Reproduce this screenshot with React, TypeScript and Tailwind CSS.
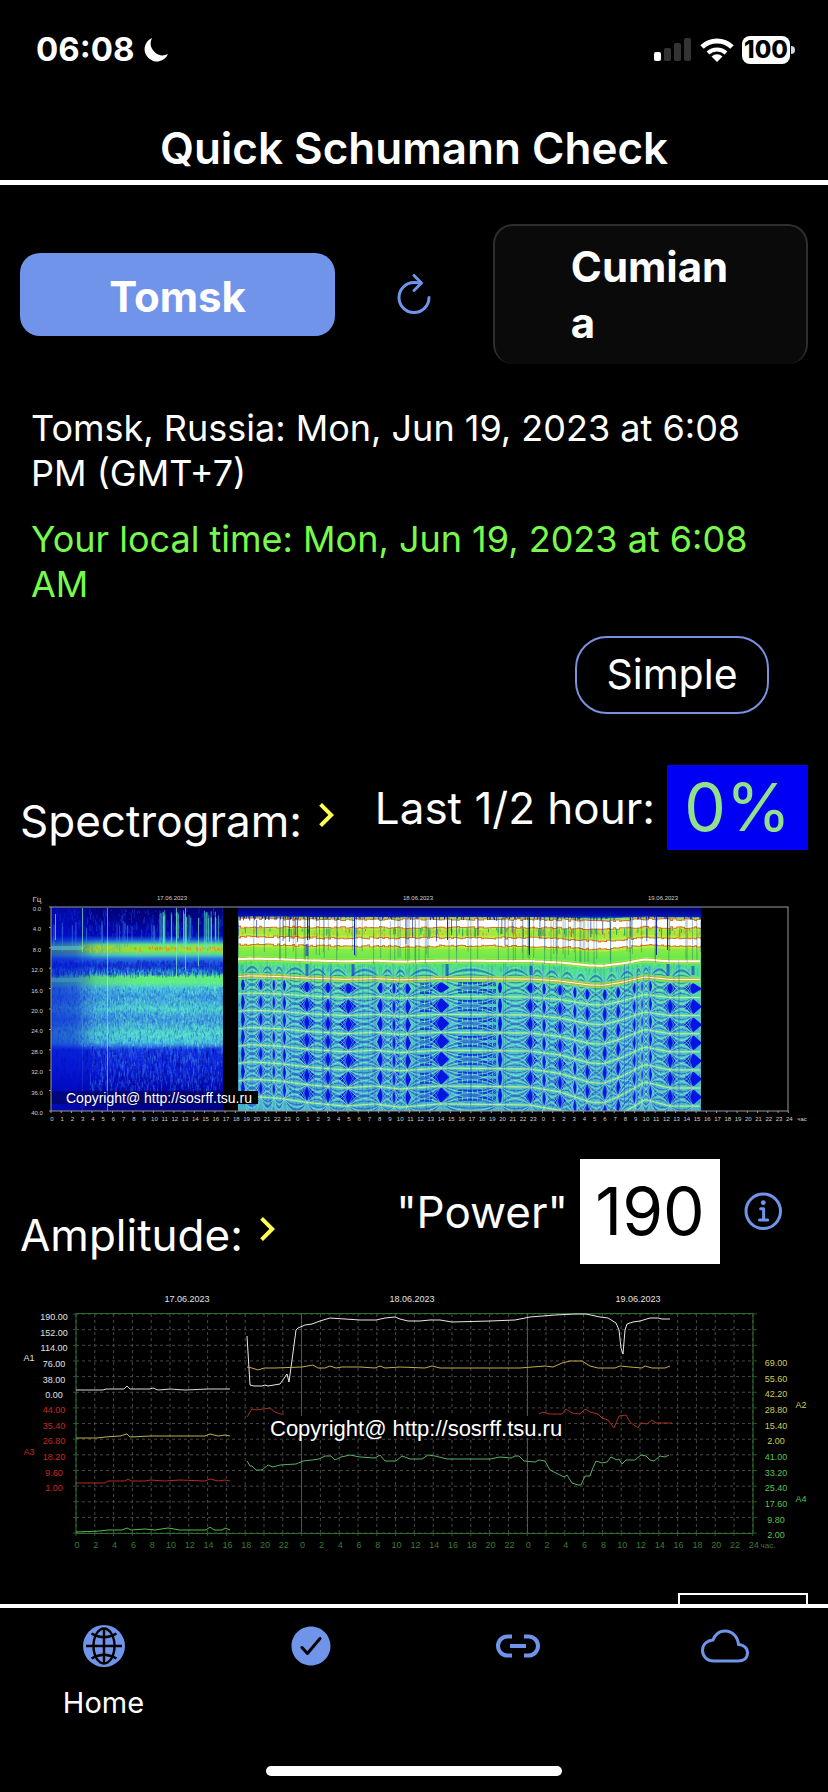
import React, { useState } from 'react';
import { IoRefreshOutline, IoCheckmarkCircle, IoCloudOutline, IoInformationCircleOutline } from 'react-icons/io5';
import { MdChevronRight } from 'react-icons/md';

// Small seeded generator so the charts look the same on every render
const makeRandom = (seed: number) => () => {
  seed = (seed * 16807) % 2147483647;
  return seed / 2147483647;
};

// ---------- spectrogram ----------

const HOUR = 10.24;
const PLOT_LEFT = 51;
const PLOT_TOP = 27;
const PLOT_BOTTOM = 231;
const LIVE_START = 238;
const LIVE_END = 701;

// [x, spacing between harmonics]
const spacing: [number, number][] = [
  [238, 17.4], [250, 17.2], [280, 17.4], [310, 17.8], [345, 18.1], [375, 17.9], [400, 18.2],
  [440, 17.9], [530, 18.0], [560, 18.5], [590, 19.5], [603, 19.6], [620, 18.9], [645, 17.5], [670, 18.1], [701, 18.1],
];

const spacingAt = (x: number) => {
  for (let i = 1; i < spacing.length; i++) {
    if (x <= spacing[i][0]) {
      const [x0, s0] = spacing[i - 1];
      const [x1, s1] = spacing[i];
      const t = (x - x0) / (x1 - x0);
      return s0 + (s1 - s0) * t;
    }
  }
  return spacing[spacing.length - 1][1];
};

const harmonicY = (x: number, n: number) => PLOT_TOP + n * spacingAt(x);

const harmonicPath = (n: number, from = LIVE_START, to = LIVE_END) => {
  let d = '';
  for (let x = from; x <= to; x += 3) {
    d += `${d ? 'L' : 'M'}${x} ${harmonicY(x, n).toFixed(1)}`;
  }
  return d;
};

// [x, half width] of the quiet spots
const nodes: [number, number][] = [
  [243, 2], [261, 4], [274, 2], [284, 2], [307, 8], [328, 5], [348, 9], [381, 4], [394, 2], [407, 4], [441, 9],
  [500, 2], [531, 6], [544, 2], [560, 6], [575, 2], [587, 4], [605, 3], [618, 3], [635, 3], [642, 2], [650, 2], [670, 6], [693, 9],
];

const diamondPath = () => {
  let d = '';
  for (const [x, w] of nodes) {
    for (let n = 4.5; n < 11.5; n++) {
      const y = harmonicY(x, n);
      const h = n < 5 ? 5 : 7;
      d += `M${x - w} ${y.toFixed(1)}l${w - 1} ${-h}h2l${w - 1} ${h}l${1 - w} ${h}h-2z`;
    }
  }
  return d;
};

const latticePath = (amplitude: number) => {
  let d = '';
  for (let i = 1; i < nodes.length; i++) {
    const x0 = nodes[i - 1][0];
    const x1 = nodes[i][0];
    for (let n = 4; n < 12; n++) {
      const y0 = harmonicY(x0, n);
      const y1 = harmonicY(x1, n);
      const mid = (x0 + x1) / 2;
      const my = harmonicY(mid, n);
      d += `M${x0} ${y0.toFixed(1)}Q${mid} ${(my + amplitude).toFixed(1)} ${x1} ${y1.toFixed(1)}`;
      d += `M${x0} ${y0.toFixed(1)}Q${mid} ${(my - amplitude).toFixed(1)} ${x1} ${y1.toFixed(1)}`;
    }
  }
  return d;
};

const stripePath = () => {
  let d = '';
  for (let n = 4; n < 11; n++) {
    for (const off of [0.3, 0.68]) {
      const y = harmonicY(478, n + off);
      d += `M458 ${y.toFixed(1)}H496`;
      d += `M420 ${(y + 1).toFixed(1)}H432M390 ${y.toFixed(1)}H400`;
    }
  }
  return d;
};

// Short pieces of a band, each a little thicker or thinner than the next
const bandPath = (n: number, seed: number) => {
  const random = makeRandom(seed);
  let d = '';
  for (let x = LIVE_START; x < LIVE_END; x += 3) {
    const y = harmonicY(x, n);
    const h = 2.5 + random() * 2;
    d += `M${x} ${(y - h).toFixed(1)}h3.2V${(y + h).toFixed(1)}h-3.2z`;
  }
  return d;
};

// Little dashes scattered over a box
const speckle = (seed: number, count: number, x0: number, x1: number, y0: number, y1: number, len: number) => {
  const random = makeRandom(seed);
  let d = '';
  for (let i = 0; i < count; i++) {
    const x = x0 + random() * (x1 - x0);
    const y = y0 + random() * (y1 - y0 - len);
    d += `M${x.toFixed(1)} ${y.toFixed(1)}v${(1 + random() * len).toFixed(1)}`;
  }
  return d;
};

const streaks = (seed: number, count: number, x0: number, x1: number, top: number, bottom: number) => {
  const random = makeRandom(seed);
  let d = '';
  for (let i = 0; i < count; i++) {
    const x = x0 + random() * (x1 - x0);
    const y = top + random() * 8;
    d += `M${x.toFixed(1)} ${y.toFixed(1)}V${(bottom - random() * 14).toFixed(1)}`;
  }
  return d;
};

const freqLabels = ['0.0', '4.0', '8.0', '12.0', '16.0', '20.0', '24.0', '28.0', '32.0', '36.0', '40.0'];
const hourMarks = Array.from({ length: 73 }, (_, i) => i);

const Spectrogram = () => (
  <svg viewBox="0 0 828 250" className="block w-full" role="img" aria-label="Spectrogram">
    <defs>
      <linearGradient id="quiet" x1="0" y1="0" x2="0" y2="1">
        <stop offset="0" stopColor="#00006a" />
        <stop offset="0.14" stopColor="#0208b4" />
        <stop offset="0.165" stopColor="#2070e0" />
        <stop offset="0.185" stopColor="#60e880" />
        <stop offset="0.2" stopColor="#98e038" />
        <stop offset="0.215" stopColor="#80e848" />
        <stop offset="0.235" stopColor="#50d0b0" />
        <stop offset="0.255" stopColor="#2470e0" />
        <stop offset="0.29" stopColor="#1a44dc" />
        <stop offset="0.32" stopColor="#38b8d8" />
        <stop offset="0.345" stopColor="#62ee78" />
        <stop offset="0.37" stopColor="#60ec80" />
        <stop offset="0.4" stopColor="#46c4dc" />
        <stop offset="0.44" stopColor="#3a98e0" />
        <stop offset="0.5" stopColor="#4cd0d0" />
        <stop offset="0.55" stopColor="#3890e0" />
        <stop offset="0.62" stopColor="#50dccc" />
        <stop offset="0.665" stopColor="#44bcdc" />
        <stop offset="0.7" stopColor="#1030e0" />
        <stop offset="0.8" stopColor="#0a1cd4" />
        <stop offset="0.88" stopColor="#0208b8" />
        <stop offset="1" stopColor="#000080" />
      </linearGradient>
      <linearGradient id="early" x1="0" y1="0" x2="1" y2="0">
        <stop offset="0" stopColor="#0010d0" stopOpacity="0.6" />
        <stop offset="0.14" stopColor="#0010d0" stopOpacity="0.5" />
        <stop offset="0.26" stopColor="#0010d0" stopOpacity="0.12" />
        <stop offset="0.5" stopColor="#0010d0" stopOpacity="0" />
      </linearGradient>
      <linearGradient id="live" x1="0" y1="0" x2="0" y2="1">
        <stop offset="0" stopColor="#000070" />
        <stop offset="0.045" stopColor="#0010b8" />
        <stop offset="0.06" stopColor="#48d0a0" />
        <stop offset="0.12" stopColor="#a8e83c" />
        <stop offset="0.2" stopColor="#90ec40" />
        <stop offset="0.25" stopColor="#68e850" />
        <stop offset="0.29" stopColor="#50e080" />
        <stop offset="0.34" stopColor="#50dc98" />
        <stop offset="0.4" stopColor="#50d8a0" />
        <stop offset="0.5" stopColor="#50c4c8" />
        <stop offset="1" stopColor="#48b0cc" />
      </linearGradient>
      <clipPath id="quietClip"><rect x="51" y="27" width="172" height="204" /></clipPath>
      <clipPath id="liveClip"><rect x="238" y="27" width="463" height="204" /></clipPath>
    </defs>

    <g clipPath="url(#quietClip)" fill="none">
      <rect x="51" y="27" width="172" height="204" fill="url(#quiet)" />
      <path d={speckle(11, 1100, 51, 223, 80, 98, 4)} stroke="#0c20c8" strokeOpacity="0.4" />
      <path d={speckle(12, 1600, 51, 223, 106, 165, 3)} stroke="#1a48d8" strokeOpacity="0.3" />
      <path d={speckle(13, 1500, 80, 223, 100, 168, 3)} stroke="#6ff0c8" strokeOpacity="0.4" />
      <path d={speckle(14, 900, 90, 223, 162, 215, 6)} stroke="#3c80e8" strokeOpacity="0.35" />
      <path d={speckle(15, 500, 51, 223, 166, 231, 6)} stroke="#000890" strokeOpacity="0.5" />
      <path d={speckle(16, 220, 51, 223, 28, 62, 8)} stroke="#1438d8" strokeOpacity="0.6" />
      <rect x="51" y="27" width="172" height="204" fill="url(#early)" />
      <path d="M51 68H82" stroke="#58d8e8" strokeWidth="4" strokeOpacity="0.5" />
      <path d="M51 100H82" stroke="#40b0e0" strokeWidth="4" strokeOpacity="0.4" />
      <path d={speckle(17, 160, 82, 223, 65, 73, 2)} stroke="#e0c828" strokeOpacity="0.6" />
      <path d={speckle(18, 60, 135, 223, 66, 71, 2)} stroke="#f08028" strokeOpacity="0.8" />
      <path d={streaks(19, 34, 160, 222, 30, 72)} stroke="#58e8b8" strokeOpacity="0.6" />
      <path d={streaks(20, 16, 54, 160, 40, 72)} stroke="#40a0e0" strokeOpacity="0.5" />
      <path d="M82.500 28V72M176.500 28V98M185.500 28V90M198.500 38V86M55.500 34V60" stroke="#80ecb0" strokeOpacity="0.7" />
      <path d="M107.500 28V231" stroke="#d0f0ff" strokeOpacity="0.5" />
      <path d="M82.500 72V231M198.500 86V215M141.500 50V160" stroke="#60b0e0" strokeOpacity="0.15" />
    </g>

    <g clipPath="url(#liveClip)" fill="none">
      <rect x="238" y="27" width="463" height="204" fill="url(#live)" />
      <path d={speckle(31, 260, 238, 701, 84, 97, 8)} stroke="#38a0e0" strokeOpacity="0.5" />
      <path d={speckle(32, 2600, 238, 701, 108, 231, 2)} stroke="#1c50dc" strokeOpacity="0.45" />
      <path d={speckle(33, 1600, 238, 701, 104, 231, 2)} stroke="#70e8b8" strokeOpacity="0.5" />
      <path d={latticePath(8)} stroke="#1838d0" strokeOpacity="0.55" />
      <path d={latticePath(18)} stroke="#1838d0" strokeWidth="2" strokeOpacity="0.5" />
      <path d={diamondPath()} fill="#0414e4" />
      <path d={stripePath()} stroke="#0a28dc" strokeWidth="4" strokeOpacity="0.8" strokeDasharray="4 1" />
      <path d={latticePath(13)} stroke="#80ecc8" strokeOpacity="0.7" />
      <path d={latticePath(23)} stroke="#80ecc8" strokeOpacity="0.6" />
      <path d={latticePath(37)} stroke="#80ecc8" strokeOpacity="0.4" />
      {[5, 6, 7, 8, 9, 10, 11].map((n) => (
        <g key={n}>
          <path d={harmonicPath(n)} stroke="#70e0a8" strokeWidth="3" strokeOpacity="0.5" />
          <path d={harmonicPath(n)} stroke="#dcf48c" strokeOpacity="0.8" />
        </g>
      ))}
      {[3, 4].map((n) => (
        <g key={n}>
          <path d={harmonicPath(n)} stroke="#8cf040" strokeWidth="6" strokeOpacity="0.7" />
          <path d={harmonicPath(n)} stroke="#e09840" strokeWidth="3" strokeOpacity="0.8" />
          <path d={harmonicPath(n)} stroke="#fffff0" strokeWidth={n === 3 ? 2 : 1} />
        </g>
      ))}
      {[0.92, 1.95].map((n) => (
        <g key={n}>
          <path d={harmonicPath(n)} stroke="#c8f040" strokeWidth="13" strokeOpacity="0.7" />
          <path d={bandPath(n, 50 + n * 20)} stroke="#e84020" strokeWidth="2" strokeOpacity="0.7" />
          <path d={bandPath(n, 50 + n * 20)} fill="#fff" />
        </g>
      ))}
      <path d={speckle(34, 160, 238, 701, 48, 58, 4)} stroke="#f08028" strokeOpacity="0.6" />
      <path d={speckle(35, 260, 238, 701, 34, 40, 5)} stroke="#0818b0" strokeOpacity="0.8" />
      <path d={speckle(36, 60, 238, 701, 48, 58, 9)} stroke="#28b060" />
      <path d={streaks(37, 90, 238, 701, 33, 84)} stroke="#085070" strokeOpacity="0.35" />
      <path d={streaks(38, 22, 238, 701, 34, 66)} stroke="#0418a0" strokeOpacity="0.6" />
      <path d="M307.500 34V60M354.500 36V75M447.500 34V60M656.500 34V75M667.500 36V70M529.500 36V75" stroke="#0414b0" strokeOpacity="0.9" />
      <path d="M307 64V76M307 84V96M353 84V96M447 84V96M668 84V96M693 86V95M531 86V95" stroke="#1428d8" strokeWidth="3" strokeOpacity="0.6" />
      <path d={streaks(39, 70, 238, 701, 80, 231)} stroke="#103cc8" strokeOpacity="0.2" />
    </g>

    <rect x="51" y="211" width="172" height="13" fill="#000020" fillOpacity="0.4" />
    <rect x="223" y="211" width="35" height="13" fill="#000" />
    <rect x="51" y="27" width="737" height="204" fill="none" stroke="#9a9a9a" />
    <g stroke="#9a9a9a">
      {freqLabels.map((label, i) => (
        <line key={label} x1="49" x2="51" y1={PLOT_TOP + i * 20.4} y2={PLOT_TOP + i * 20.4} />
      ))}
      {hourMarks.map((i) => (
        <line key={i} x1={PLOT_LEFT + i * HOUR} x2={PLOT_LEFT + i * HOUR} y1={PLOT_BOTTOM} y2={PLOT_BOTTOM + 2} />
      ))}
    </g>
    <g fill="#d0d0d0" fontSize="6" textAnchor="middle" className="font-['Liberation_Sans',sans-serif]">
      <text x="37" y="22" fontSize="8">Гц</text>
      {freqLabels.map((label, i) => (
        <text key={label} x="37" y={31 + i * 20.4}>{label}</text>
      ))}
      {hourMarks.map((i) => (
        <text key={i} x={PLOT_LEFT + 1 + i * HOUR} y="241">{i === 72 ? 24 : i % 24}</text>
      ))}
      <text x="802" y="241">час</text>
      <text x="172" y="20">17.06.2023</text>
      <text x="418" y="20">18.06.2023</text>
      <text x="663" y="20">19.06.2023</text>
    </g>
    <text x="66" y="223" fill="#fff" fontSize="14" className="font-['Liberation_Sans',sans-serif]">
      Copyright@ http://sosrff.tsu.ru
    </text>
  </svg>
);

// ---------- amplitude ----------

const leftWhite = ['190.00', '152.00', '114.00', '76.00', '38.00', '0.00'];
const leftRed = ['44.00', '35.40', '26.80', '18.20', '9.60', '1.00'];
const rightYellow = ['69.00', '55.60', '42.20', '28.80', '15.40', '2.00'];
const rightGreen = ['41.00', '33.20', '25.40', '17.60', '9.80', '2.00'];
const ROW = 15.65;
const TWO_HOURS = 18.8;
const columns = Array.from({ length: 37 }, (_, i) => i);
const rows = Array.from({ length: 15 }, (_, i) => i);

const series = [
  // A1
  { color: '#d8d8d8', points: '76,110 103,110 106,109 124,109 127,106 130,109 150,109 153,108 158,110 170,109 185,110 208,109 230,109' },
  { color: '#e8e8e8', points: '247,56 250,105 254,106 262,106 265,105 268,106 280,104 287,94 289,102 292,80 296,50 298,48 305,45 312,44 320,41 330,38 345,39 360,40 376,40 385,38 395,37 400,39 408,41 420,41 430,40 440,40 452,42 490,41 515,40 530,37 555,35 575,34 586,34 600,37 608,38 616,43 619,50 621,68 623,74 625,50 627,44 633,42 640,41 650,38 658,38 662,39 670,39' },
  // A2
  { color: '#b8b050', points: '76,158 97,158 105,157 120,156 127,154 130,157 150,156 175,156 205,156 210,154 218,156 225,155 230,156' },
  { color: '#c8a850', points: '247,87 252,88 258,90 264,88 275,88 302,87 313,85 318,88 325,88 330,86 336,88 342,87 360,87 375,88 380,86 385,88 400,87 425,88 432,86 440,88 520,88 545,86 553,87 562,83 570,81 582,81 590,86 598,88 615,88 620,86 630,87 642,88 645,86 652,88 665,88 670,86' },
  // A3
  { color: '#b82a20', points: '76,203 105,203 108,201 125,201 128,199 131,201 145,201 150,200 165,201 180,200 205,201 210,199 218,201 225,200 230,201' },
  { color: '#a83020', points: '247,137 252,129 256,130 270,128 275,132 280,134 284,134' },
  { color: '#a83020', points: '539,134 543,132 549,134 562,134 566,129 572,133 580,134 585,129 590,132 598,134 602,138 608,140 614,148 619,136 626,135 630,142 638,148 641,143 647,144 652,140 656,143 672,143' },
  // A4
  { color: '#58b848', points: '76,252 100,251 108,250 122,250 127,248 131,250 145,249 155,250 168,248 180,250 206,250 210,247 214,250 222,250 225,248 230,250' },
  { color: '#58b060', points: '247,181 250,186 252,186 256,190 262,190 268,185 273,187 280,185 296,184 303,181 312,180 319,179 325,176 331,176 335,180 341,177 350,175 360,177 375,178 380,175 385,181 396,181 402,176 410,179 422,179 428,175 435,176 447,179 490,179 500,177 511,178 515,176 519,176 524,181 535,182 539,180 545,181 550,190 560,195 564,197 567,195 572,203 578,205 581,205 585,196 590,196 592,190 596,181 602,183 607,182 611,177 617,180 619,179 622,184 626,180 635,180 641,175 646,176 650,180 654,181 660,176 665,177 669,175' },
];

const Amplitude = () => (
  <svg viewBox="0 0 828 290" className="block w-full" role="img" aria-label="Amplitude chart">
    <g strokeDasharray="3 3" stroke="#484848">
      {rows.map((i) => (
        <line key={i} x1="76" x2="753" y1={34 + i * ROW} y2={34 + i * ROW} />
      ))}
      {columns.map((i) => (
        <line key={i} x1={76 + i * TWO_HOURS} x2={76 + i * TWO_HOURS} y1="34" y2="253" />
      ))}
    </g>
    <g stroke="#1f5a20">
      {rows.map((i) => (
        <path key={i} d={`M73 ${34 + i * ROW}h3M753 ${34 + i * ROW}h4`} />
      ))}
      {columns.map((i) => (
        <path key={i} d={`M${76 + i * TWO_HOURS} 253v3`} />
      ))}
      <path d="M76 33.500H753V253.500H76ZM301.500 34V253M527.500 34V253" fill="none" stroke="#27702a" />
    </g>
    <g fill="none" strokeLinejoin="round">
      {series.map((s, i) => (
        <polyline key={i} points={s.points} stroke={s.color} />
      ))}
    </g>
    <g fontSize="9" textAnchor="middle" className="font-['Liberation_Sans',sans-serif]">
      <g fill="#e0e0e0">
        <text x="187" y="22">17.06.2023</text>
        <text x="412" y="22">18.06.2023</text>
        <text x="638" y="22">19.06.2023</text>
        <text x="29" y="81">A1</text>
        {leftWhite.map((v, i) => (
          <text key={v} x="54" y={40 + i * ROW}>{v}</text>
        ))}
      </g>
      <g fill="#c8281e">
        <text x="29" y="175">A3</text>
        {leftRed.map((v, i) => (
          <text key={v} x="54" y={133 + i * ROW}>{v}</text>
        ))}
      </g>
      <g fill="#d0cc58">
        <text x="801" y="128">A2</text>
        {rightYellow.map((v, i) => (
          <text key={v} x="776" y={86 + i * ROW}>{v}</text>
        ))}
      </g>
      <g fill="#58c050">
        <text x="801" y="222">A4</text>
        {rightGreen.map((v, i) => (
          <text key={v} x="776" y={180 + i * ROW}>{v}</text>
        ))}
      </g>
      <g fill="#3c7a34">
        {columns.map((i) => (
          <text key={i} x={77 + i * TWO_HOURS} y="268">{i === 36 ? 24 : (i * 2) % 24}</text>
        ))}
        <text x="768" y="268" fontSize="8">час.</text>
      </g>
    </g>
    <rect x="269" y="136" width="296" height="22" fill="#000" />
    <text x="270" y="156" fill="#fff" fontSize="22" className="font-['Liberation_Sans',sans-serif]">
      Copyright@ http://sosrff.tsu.ru
    </text>
  </svg>
);

// ---------- icons ----------

const GlobeIcon = () => (
  <svg viewBox="0 0 42 42" className="size-[42px]" fill="none" stroke="#000" strokeWidth="2.4">
    <circle cx="21" cy="21" r="21" fill="#6f94e9" stroke="none" />
    <path d="M21 3V39M3 21H39" />
    <ellipse cx="21" cy="21" rx="10.500" ry="17.500" />
    <path d="M8.500 8.500Q21 16 33.500 8.500M8.500 33.500Q21 26 33.500 33.500" />
  </svg>
);

const LinkIcon = () => (
  <svg viewBox="0 0 44 24" className="h-6 w-11" fill="none" stroke="#6f94e9" strokeWidth="4">
    <path d="M16 2.500H11.500A9.500 9.500 0 0 0 11.500 21.500H16M28 2.500H32.500A9.500 9.500 0 0 1 32.500 21.500H28M14 12H30" />
  </svg>
);

// ---------- page ----------

const StatusBar = () => (
  <div className="flex h-[100px] shrink-0 items-center justify-between pl-9 pr-[33px]">
    <div className="flex items-center gap-[10px] text-[33px] font-bold">
      06:08
      <svg viewBox="0 0 24 24" className="size-6" fill="#fff">
        <path d="M8 0A12.200 12.200 0 1 0 24 16A12 12 0 0 1 8 0Z" />
      </svg>
    </div>
    <div className="flex items-center gap-2">
      <svg viewBox="0 0 38 24" className="h-6 w-[38px]">
        <rect x="0" y="14" width="7" height="9" rx="2" fill="#fff" />
        <rect x="10" y="10" width="7" height="13" rx="2" fill="#333" />
        <rect x="20" y="5" width="7" height="18" rx="2" fill="#333" />
        <rect x="30" y="0" width="7" height="23" rx="2" fill="#333" />
      </svg>
      <svg viewBox="0 0 34 24" className="h-6 w-[34px]" fill="none" stroke="#fff" strokeWidth="5">
        <path d="M2 9A21.500 21.500 0 0 1 32 9" />
        <path d="M8 15A13 13 0 0 1 26 15" strokeWidth="4" />
        <path d="M17 24L11.500 18.500A8 8 0 0 1 22.500 18.500Z" fill="#fff" stroke="none" />
      </svg>
      <div className="flex items-center gap-px">
        <span className="flex h-7 w-12 items-center justify-center rounded-lg bg-white text-[24px] font-extrabold text-black">100</span>
        <span className="h-2 w-1 rounded-r-full bg-gray-300" />
      </div>
    </div>
  </div>
);

const tabs = [
  { name: 'Home', icon: <GlobeIcon />, showLabel: true },
  { name: 'Check', icon: <IoCheckmarkCircle className="size-12" />, showLabel: false },
  { name: 'Links', icon: <LinkIcon />, showLabel: false },
  { name: 'Weather', icon: <IoCloudOutline className="size-12" />, showLabel: false },
];

const App = () => {
  const [station, setStation] = useState<string>('Tomsk, Russia');

  return (
    <div className="flex h-screen flex-col overflow-hidden bg-black font-[Inter,sans-serif] text-white">
      <StatusBar />
      <header className="flex h-[85px] shrink-0 items-end justify-center border-b-[5px] border-white pb-1">
        <h1 className="text-[44px] font-semibold leading-[56px]">Quick Schumann Check</h1>
      </header>

      <main className="min-h-0 flex-1 overflow-hidden">
        <div className="flex items-center justify-between px-5 pt-[39px]">
          <button
            className="h-[83px] w-2/5 rounded-[20px] bg-[#6f94e9] pt-1 text-[42px] font-bold"
            onClick={() => setStation('Tomsk, Russia')}
          >
            Tomsk
          </button>
          <button aria-label="Refresh" className="text-[#6f94e9]">
            <IoRefreshOutline className="size-12" />
          </button>
          <button
            className="h-[140px] w-2/5 break-all rounded-[20px] border-2 border-b-0 border-[#2e2e2e] bg-[#0a0a0a] pl-[76px] pr-[70px] text-left text-[42px] font-bold leading-[56px]"
            onClick={() => setStation('Cumiana, Italy')}
          >
            Cumiana
          </button>
        </div>

        <div className="flex flex-col gap-[21px] px-[31px] pt-[42px] text-[36px] leading-[45px]">
          <p>{`${station}: Mon, Jun 19, 2023 at 6:08 PM (GMT+7)`}</p>
          <p className="text-[#78f94c]">Your local time: Mon, Jun 19, 2023 at 6:08 AM</p>
        </div>

        <div className="flex justify-end pr-[59px] pt-[29px]">
          <button className="h-[78px] w-[194px] rounded-[32px] border-2 border-[#7a92dd] text-[41px]">Simple</button>
        </div>

        <section>
          <div className="flex justify-between px-5 pt-[51px]">
            <h2 className="flex items-center pt-6 text-[44px] leading-[64px]">
              Spectrogram:
              <MdChevronRight className="mb-3 size-12 text-[#ffff54]" />
            </h2>
            <div className="flex h-[85px] items-center gap-3 text-[44px]">
              Last 1/2 hour:
              <span className="flex h-[85px] w-[141px] items-center justify-center bg-[#0000f5] text-[66px] text-[#90e08c]">0%</span>
            </div>
          </div>
          <div className="pt-[27px]">
            <Spectrogram />
          </div>
        </section>

        <section>
          <div className="flex justify-between px-5 pt-[29px]">
            <h2 className="flex items-center pt-11 text-[44px] leading-[64px]">
              Amplitude:
              <MdChevronRight className="mb-3 size-12 text-[#ffff54]" />
            </h2>
            <div className="flex h-[105px] items-center gap-3 text-[44px]">
              "Power"
              <span className="flex h-[105px] w-[140px] items-center justify-center bg-white text-[66px] text-black">190</span>
              <button aria-label="About power" className="pl-2 pr-5 text-[#6f94e9]">
                <IoInformationCircleOutline className="size-12" />
              </button>
            </div>
          </div>
          <div className="pt-[13px]">
            <Amplitude />
          </div>
        </section>

        <div className="flex justify-end px-5 pt-[23px]">
          <div className="h-20 w-[130px] border-2 border-white" />
        </div>
      </main>

      <nav className="flex h-[188px] shrink-0 flex-col justify-between border-t-4 border-white pb-4">
        <div className="flex">
          {tabs.map((tab) => (
            <a key={tab.name} href={`#${tab.name}`} aria-label={tab.name} className="flex flex-1 flex-col items-center pt-3 text-[#6f94e9]">
              <span className="flex h-[52px] items-center">{tab.icon}</span>
              {tab.showLabel && <span className="pt-[11px] text-[29px] leading-10 text-white">{tab.name}</span>}
            </a>
          ))}
        </div>
        <div className="h-[10px] w-[296px] self-center rounded-full bg-white" />
      </nav>
    </div>
  );
};

export default App;
